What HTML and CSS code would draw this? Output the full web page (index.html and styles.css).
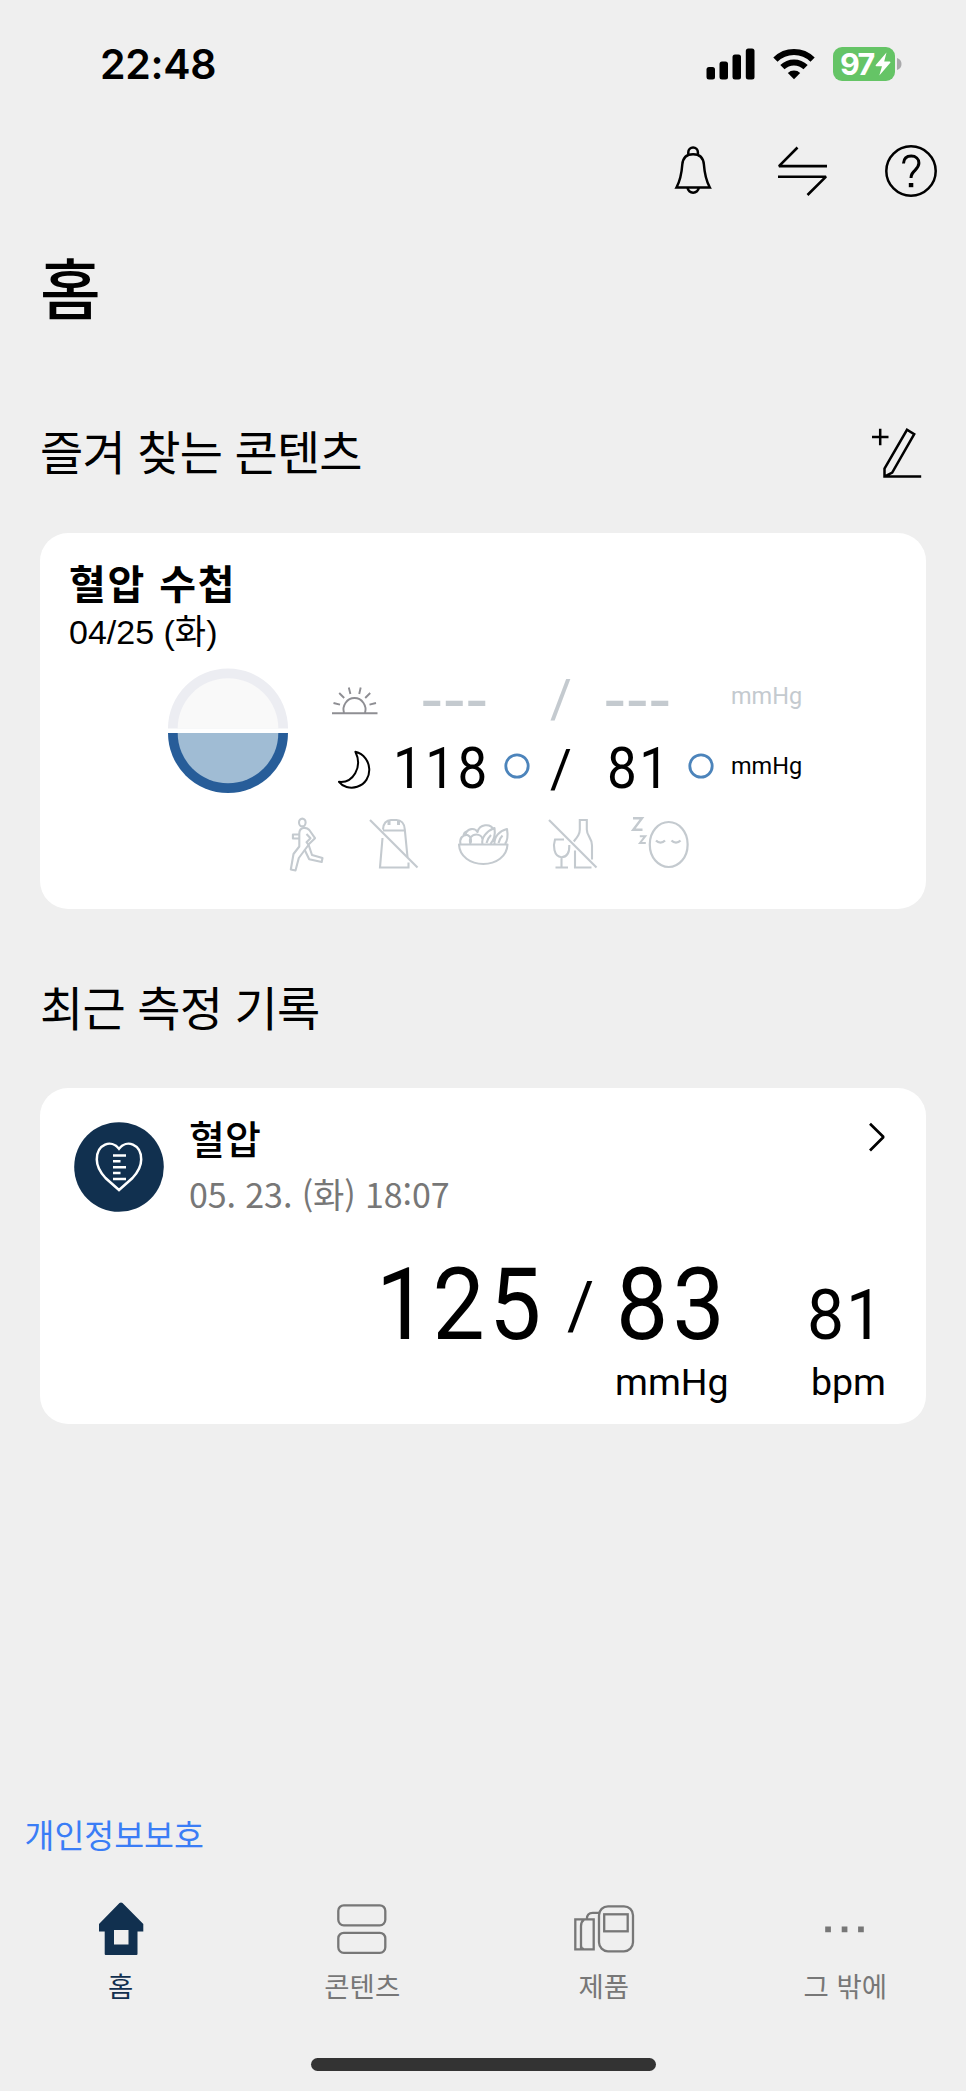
FILE: index.html
```html
<!DOCTYPE html>
<html lang="ko">
<head>
<meta charset="utf-8">
<title>홈</title>
<link rel="stylesheet" href="styles.css">
</head>
<body>
<div class="screen">
  <div class="status">
    <span class="time">22:48</span>
    <div class="status-icons">
      <svg class="signal" width="49" height="32" viewBox="0 0 49 32"><rect x="0.5" y="19" width="8.5" height="12.5" rx="2.5"/><rect x="13.5" y="13.5" width="8.5" height="18" rx="2.5"/><rect x="26.5" y="6.5" width="8.5" height="25" rx="2.5"/><rect x="39.8" y="0.5" width="8.7" height="31" rx="2.5"/></svg>
      <svg class="wifi" width="42" height="32" viewBox="0 0 42 32"><g fill="none" stroke="#000" stroke-width="6"><path d="M2.4 11.6a26.5 26.5 0 0 1 37.2 0"/><path d="M9.4 19.2a16.6 16.6 0 0 1 23.2 0"/></g><path d="M21 31.3l-6.2-6.2a9 9 0 0 1 12.4 0z"/></svg>
      <div class="battery"><span>97</span><svg width="16" height="24" viewBox="0 0 16 24"><path d="M11.500 0.500L0.800 13q-.7 1.200.6 1.300H7L4.300 23.500 15.300 10.700q.6-1.200-.6-1.300H9.200z" fill="#fff"/></svg></div>
      <svg class="nub" width="5" height="12" viewBox="0 0 5 12"><path d="M0 0q4.500 1.500 4.500 6T0 12z" fill="#a9a9ab"/></svg>
    </div>
  </div>

  <div class="toolbar">
    <svg width="40" height="52" viewBox="0 0 40 52"><g fill="none" stroke="#000" stroke-width="2.500"><path d="M15.300 9.500V7.200a4.800 4.800 0 0 1 9.600 0v2.300"/><path d="M20.100 9.200c-6.800 0-10.300 4.300-10.800 10.300-.7 9.500-1.800 15.500-5.800 23h33.300c-4-7.500-5.200-13.500-5.900-23-.5-6-4-10.300-10.800-10.300z"/><path d="M14.500 42.500a5.700 6 0 0 0 11.300 0"/></g></svg>
    <svg width="52" height="52" viewBox="0 0 52 52"><g fill="none" stroke="#000" stroke-width="2.600" stroke-linejoin="bevel"><path d="M21.500 2.500L3 21.100h48"/><path d="M2 31.700h48L31.500 50"/></g></svg>
    <svg width="54" height="54" viewBox="0 0 54 54"><g fill="none" stroke="#000"><circle cx="27" cy="27" r="24.700" stroke-width="2.500"/><path d="M19.500 19.500c.3-4.800 3.400-7.400 7.700-7.400 4.600 0 7.700 3 7.700 7 0 3.200-1.500 4.800-3.700 7-2.900 2.900-4.200 4.200-4.200 8" stroke-width="3"/></g><path d="M24.800 39h4.500v4.200h-4.500z"/></svg>
  </div>

  <h1>홈</h1>

  <div class="section-head first">
    <h2>즐겨 찾는 콘텐츠</h2>
    <svg width="54" height="54" viewBox="0 0 54 54"><g fill="none" stroke="#000" stroke-width="2.500"><path d="M2 11h16.500M10.200 2.800v16.500"/><path d="M51.200 50.600H14.500v-8.100L37 3.800l7.200 4.300L22.200 46.600l-7.700 4"/></g></svg>
  </div>

  <section class="card diary">
    <h3>혈압 수첩</h3>
    <p class="date">04/25 (화)</p>
    <div class="summary">
      <svg class="dial" width="120" height="126" viewBox="0 0 120 126">
        <path d="M0 60.500a60 60 0 0 1 120 0z" fill="#ecedf2"/><path d="M9.700 60.500a50.300 50.300 0 0 1 100.600 0z" fill="#f9f9f9"/>
        <path d="M0 65a60 60 0 0 0 120 0z" fill="#275d99"/><path d="M9.700 65a50.300 50.300 0 0 0 100.600 0z" fill="#a0bcd4"/>
      </svg>
      <div class="readings">
        <div class="reading empty">
          <svg class="sun" width="48" height="30" viewBox="0 0 48 30"><g fill="none" stroke="#8e8e93" stroke-width="1.900"><path d="M1 27.200h45.500M13 27a11 11.500 0 1 1 21 0M2.500 17l6.500 1.700M8.200 7l5 5M17.800 1.500l1.600 6.500M29.700 1.500L28.200 8M39.200 7l-5 5M45 17l-6.500 1.700"/></g></svg>
          <span class="dashes">---</span><i></i><span class="slash">/</span><span class="dashes">---</span><i></i><span class="unit">mmHg</span>
        </div>
        <div class="reading">
          <svg class="moon" width="36" height="40" viewBox="0 0 36 40"><path d="M18.400 1.800c17.500 4.200 18.800 29.600 1.800 35-7.300 2.300-14.800-.3-18.200-5 13.800 1.500 24-14.500 16.400-30z" fill="none" stroke="#000" stroke-width="2" stroke-linejoin="round"/></svg>
          <span class="num">118</span><svg class="ring" width="26" height="26" viewBox="0 0 26 26"><circle cx="13" cy="13" r="11.200" fill="none" stroke="#4c84bb" stroke-width="2.800"/></svg><span class="slash">/</span><span class="num dia">81</span><svg class="ring ring-dia" width="26" height="26" viewBox="0 0 26 26"><circle cx="13" cy="13" r="11.200" fill="none" stroke="#4c84bb" stroke-width="2.800"/></svg><span class="unit">mmHg</span>
        </div>
      </div>
    </div>
    <div class="habits">
      <svg width="36" height="58" viewBox="0 0 36 58"><g fill="none" stroke="#c4cacf" stroke-width="2.100" stroke-linejoin="round"><ellipse cx="13.300" cy="6.500" rx="3.300" ry="3.900"/><path d="M10.300 22.500H3.900v-4h6.400M10.300 25v-7.500c0-7 7.500-6.500 10-3.500l5.700 8.200-6.500 6.300 3.500 10.500 10.500 3-.8 4-12.500-2.800-4.700-9.700"/><path d="M10.300 25v5.500L4.500 38l-2.700 15.500 4.700 1 3.300-12.500 10-13.500"/><path d="M17.500 18l4 4.200-4 4 2 2.500"/></g></svg>
      <svg width="52" height="58" viewBox="0 0 52 58"><g fill="none" stroke="#c4cacf" stroke-width="2.100"><path d="M2 4l47.500 47.500"/><path d="M14.500 22L12 51.500h28.500v-5M15 13.500C15 7.500 18.500 4 23 4h5.500C33 4 36.500 7.500 36.800 13.500L39.500 41M15 14.500h22"/><path d="M21 5v4M30.500 5v4" stroke-width="3"/></g></svg>
      <svg width="54" height="58" viewBox="0 0 54 58"><g fill="none" stroke="#c4cacf" stroke-width="2.100" stroke-linejoin="round"><path d="M2 28.500h48.500c-.5 12-11.500 19.500-24.200 19.500S2.500 40.500 2 28.500z"/><path d="M3.500 28c-1.200-5.500 2-9.500 7-9a5.800 5.800 0 0 1 2.300 9M13.500 28c-2-6 1.500-9.500 6-9.500 3 0 5.500 2 6 4.500M8.500 18.500c1.500-6.500 9.500-7 12-2.500 2-8 13-9 16-2.500M6.500 19c.5-2 1.200-2.800 3-3.500"/><path d="M25.500 28c-1.500-6 4-13 12-16 1 7-.5 12-4 16M29.500 27c1-4 2.500-6 4.500-8M37.500 28c-.5-7 4.500-13 12.500-15 1 6 1 11-2 15M41.500 27c.8-3.500 2-5.500 4-7.500"/></g></svg>
      <svg width="52" height="58" viewBox="0 0 52 58"><g fill="none" stroke="#c4cacf" stroke-width="2.100"><path d="M2 4l47.500 47.500"/><path d="M17 23.500H8c-2 6-1.500 17 6.500 17.800 6.500-.3 8-6.300 7.800-12.300M14.500 41v10.500M8.500 51.500h12.500"/><path d="M28 34.500v17h16.500M26.800 25.500c4-5 6-7.500 6-12V4h7v9.500c0 7 5.200 8 5.200 16v14"/></g></svg>
      <svg width="60" height="58" viewBox="0 0 60 58"><g fill="none" stroke="#c4cacf" stroke-width="2.200"><path d="M2 2.200h9L2.300 13.800h9.200" stroke-width="2.400"/><path d="M8.800 20.200h5.500L9 27h5.800" stroke-width="2"/><rect x="18.800" y="6" width="37.800" height="45" rx="18.900" ry="22"/><path d="M25 24.500c2.500 2.800 6.500 2.800 9 0M40.500 24.500c2.500 2.800 6.500 2.800 9 0"/></g></svg>
    </div>
  </section>

  <div class="section-head second"><h2>최근 측정 기록</h2></div>

  <section class="card record">
    <div class="record-head">
      <svg class="badge" width="90" height="90" viewBox="0 0 90 90"><circle cx="45" cy="45" r="44.800" fill="#11304f"/><g fill="none" stroke="#fff" stroke-width="2.500"><path d="M45 68L31.500 56C25 49 22.800 43 22.800 37.500 22.800 22 37.500 17 45 26.800 52.500 17 67.200 22 67.200 37.500 67.200 43 65 49 58.500 56z"/><path d="M39 33.500h13M39 39.300h7.500M39 45.200h13M39 51h7.500M39 57h13"/></g></svg>
      <div class="record-text"><h4>혈압</h4><p>05. 23. (화) 18:07</p></div>
      <svg class="chevron" width="18" height="30" viewBox="0 0 18 30"><path d="M2 1.800l13.500 13.200L2 28.500" fill="none" stroke="#000" stroke-width="2.700" stroke-linejoin="bevel"/></svg>
    </div>
    <div class="values">
      <span class="big sys">125</span><span class="sep">/</span><span class="big">83</span><span class="pulse">81</span>
      <span class="u mm">mmHg</span><span class="u">bpm</span>
    </div>
  </section>

  <a class="privacy">개인정보보호</a>

  <nav>
    <div class="tab active"><svg width="60" height="56" viewBox="0 0 60 56"><path fill-rule="evenodd" d="M28.500 2q1.500-1 3 0L52.300 23v7.500h-5.800V53q0 1-1 1H14.700q-1 0-1-1V30.500H8V23zM23 29v14.500h14.500V29z" fill="#11304f"/></svg><span>홈</span></div>
    <div class="tab"><svg width="60" height="56" viewBox="0 0 60 56"><g fill="none" stroke="#777" stroke-width="2.300"><rect x="6.300" y="4.300" width="47" height="20" rx="5.500"/><rect x="6.300" y="31.800" width="47" height="20" rx="5.500"/></g></svg><span>콘텐츠</span></div>
    <div class="tab"><svg width="64" height="56" viewBox="0 0 64 56"><g fill="none" stroke="#777" stroke-width="2.300"><rect x="27" y="5.300" width="34" height="45" rx="9"/><rect x="32.200" y="13.300" width="23.500" height="17"/><path d="M3.300 18.300h18.400v30H3.300zM9 48.300V25c0-3 1-5 3-6.500M14.800 18.300c0-4 2.200-6.500 6-6.500h6.500M9 44c0 2.500 1 4 3 4"/></g></svg><span>제품</span></div>
    <div class="tab"><svg width="60" height="56" viewBox="0 0 60 56"><g fill="#777"><path d="M10.200 25.500h5.700v5.700h-5.700zM26.700 25.500h5.700v5.700h-5.700zM43.100 25.500h5.700v5.700h-5.700z"/></g></svg><span>그 밖에</span></div>
  </nav>
  <div class="home-bar"></div>
</div>
</body>
</html>
```
FILE: styles.css
```css
* { box-sizing: border-box; }
body, h1, h2, h3, h4, p { margin: 0; }
body {
  background: #efefef;
  color: #000;
  font-family: "Noto Sans CJK KR", sans-serif;
}
svg { display: block; flex: none; }
.screen {
  width: 966px;
  height: 2091px;
  display: flex;
  flex-direction: column;
  overflow: hidden;
}

.status {
  height: 128px;
  display: flex;
  align-items: center;
  justify-content: space-between;
  padding: 0 64px 0 100px;
}
.time { font: 600 41px/50px Inter, sans-serif; letter-spacing: -0.3px; }
.status-icons { display: flex; align-items: center; }
.wifi { margin-left: 18px; }
.battery {
  width: 62px;
  height: 34px;
  margin-left: 18px;
  padding-left: 7px;
  border-radius: 9px;
  background: #65c466;
  color: #fff;
  display: flex;
  align-items: center;
  font: 700 30.500px/34px Inter, sans-serif;
  letter-spacing: -1.6px;
}
.battery svg { margin-left: 1px; }
.nub { margin-left: 2px; }

.toolbar {
  height: 86px;
  display: flex;
  align-items: center;
  justify-content: flex-end;
  gap: 62px;
  padding-right: 28px;
}
.toolbar svg:nth-child(1) { margin-right: 1px; }
.toolbar svg:nth-child(2) { margin-right: -6px; }

h1 {
  height: 100px;
  margin: 23px 0 0 40px;
  font-size: 66px;
  font-weight: 500;
  line-height: 97px;
}
.section-head {
  display: flex;
  justify-content: space-between;
  padding: 0 42px 0 40px;
}
.section-head h2 { font-size: 47px; font-weight: 400; line-height: 68px; letter-spacing: -0.8px; }
.first { height: 118px; margin-top: 78px; }
.first h2 { margin-top: 1px; }
.first svg { margin-top: 11px; }
.second { height: 116px; margin-top: 63px; }

.card { margin: 0 40px; border-radius: 28px; background: #fff; }
.diary { height: 376px; padding: 26px 0 0 29px; }
.diary h3 { font-size: 40px; font-weight: 700; line-height: 46px; letter-spacing: 1.8px; }
.date { margin-top: 3px; font: 34px/48px "Liberation Sans", "Noto Sans CJK KR", sans-serif; }
.summary { display: flex; margin-top: 7px; padding-left: 99px; }
.dial { margin-top: 5px; }
.readings { margin-left: 43px; }
.reading {
  display: grid;
  grid-template-columns: 62px 112px 42px 50px 86px 53px auto;
  grid-template-rows: 70px;
  align-items: center;
  font-family: Roboto, sans-serif;
  line-height: 70px;
}
.reading.empty { color: #c4cacf; }
.reading .sun { margin-top: 6px; }
.reading .moon { margin: 4px 0 0 6px; }
.num {
  margin-top: 2px;
  font-size: 57px;
  letter-spacing: 2.700px;
  transform: scaleX(0.93);
  transform-origin: left;
}
.num.dia { margin-left: 10px; }
.ring { margin: -5px 0 0 -1px; }
.ring-dia { margin-left: 5px; }
.reading .slash { margin: 1px 0 0 3px; font-size: 53px; }
.dashes { font-size: 71px; letter-spacing: 2.900px; margin: 5px 0 0 29px; white-space: nowrap; }
.slash + .dashes { margin-left: 8px; }
.reading .unit { align-self: start; margin-left: -5px; font-size: 23.500px; line-height: 67px; }
.habits { display: flex; margin-top: 13px; padding-left: 220px; }
.habits svg:nth-child(2) { margin-left: 43px; }
.habits svg:nth-child(3) { margin-left: 37px; }
.habits svg:nth-child(4) { margin-left: 36px; }
.habits svg:nth-child(5) { margin-left: 32px; }

.record { height: 336px; padding: 27px 40px 0 34px; }
.record-head { display: flex; align-items: flex-start; }
.badge { margin-top: 7px; }
.record-text { flex: 1; margin-left: 25px; }
h4 { font-size: 39px; font-weight: 500; line-height: 44px; }
.record-text p { margin-top: 15px; font-size: 34px; line-height: 40px; letter-spacing: -0.1px; color: #777; }
.chevron { margin-top: 7px; }
.values {
  display: grid;
  grid-template-columns: 196px 48px 190px auto;
  grid-template-rows: 110px 42px;
  margin: 36px -40px 0 298px;
  font-family: Roboto, sans-serif;
  line-height: 110px;
}
.big, .pulse { transform: scaleX(0.93); transform-origin: left; }
.big { font-size: 100px; letter-spacing: 4.500px; }
.sys { margin-left: 4px; }
.sep { margin-left: -1px; padding-top: 2px; font-size: 66px; }
.pulse { margin-left: 1px; padding-top: 10px; font-size: 71px; letter-spacing: 2px; }
.u { padding: 1px 0 0 5px; font-size: 37.500px; line-height: 42px; }
.u.mm { grid-column: 3; padding-left: 0; margin-left: -1px; }

.privacy { margin: 386px 0 0 24.500px; font-size: 32.500px; line-height: 48px; color: #3a7df6; }

nav { display: grid; grid-template-columns: repeat(4, 1fr); margin-top: 43px; }
.tab { display: flex; flex-direction: column; align-items: center; color: #777; font-size: 27.500px; line-height: 40px; }
.tab span { margin-top: 8px; }
.tab.active { color: #11304f; }
.home-bar { width: 345px; height: 13px; margin: 53px auto 0; border-radius: 7px; background: #333; }
```
